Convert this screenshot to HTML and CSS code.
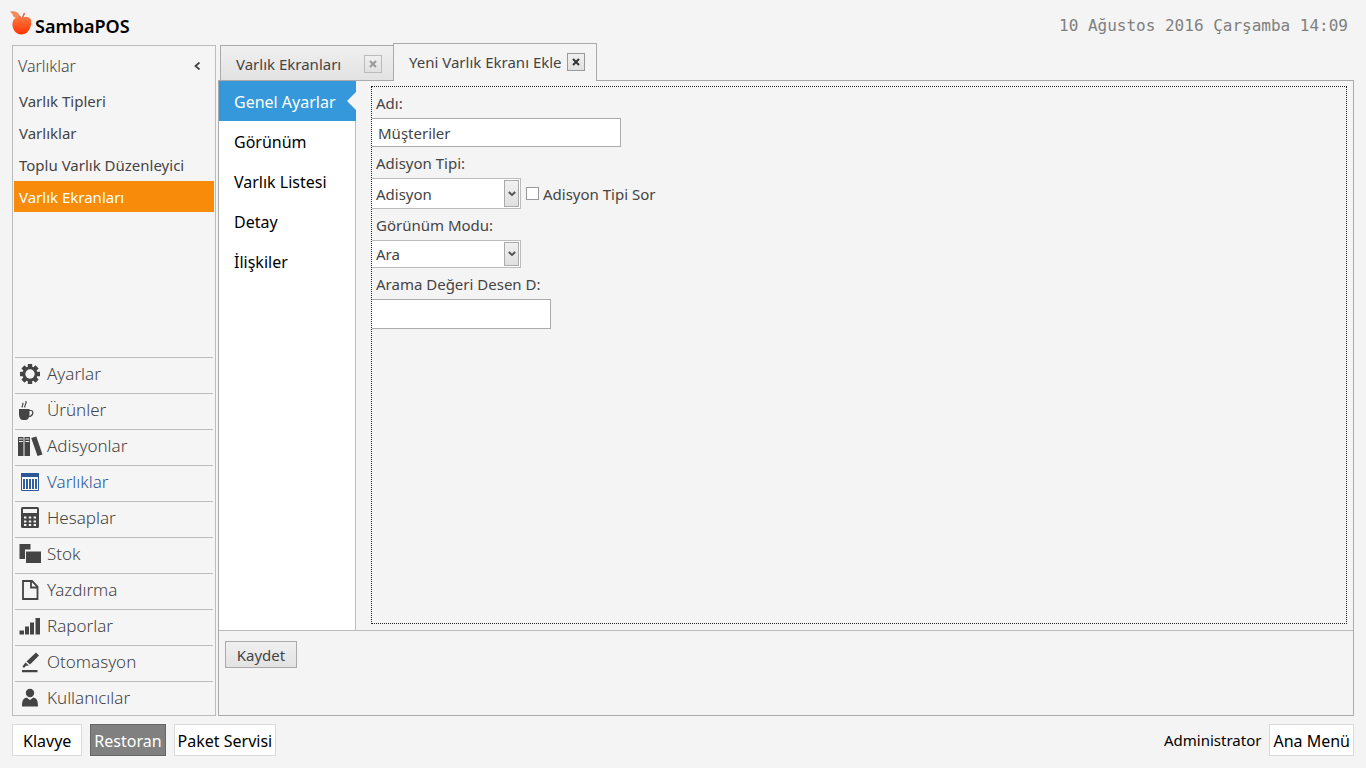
FILE: index.html
```html
<!DOCTYPE html>
<html lang="tr">
<head>
<meta charset="utf-8">
<title>SambaPOS</title>
<link rel="stylesheet" href="styles.css">
</head>
<body class="app">
<header class="header">
  <div class="brand">
    <svg class="brand-logo" viewBox="0 0 23 26" width="23" height="26" aria-hidden="true">
      <defs><linearGradient id="fruit" x1="0" y1="0" x2="0" y2="1"><stop offset="0" stop-color="#ff7a45"/><stop offset="1" stop-color="#ff3300"/></linearGradient></defs>
      <path d="M0 1.500C3 1 9 .5 10.500 8C6 9 2.500 7 2.500 4Z" fill="#f58a5b"/>
      <path d="M11 9L9.500 6M12 9L14.500 3" stroke="#e0603a" stroke-width="1.500" fill="none"/>
      <path d="M11.500 8.500C14 6.500 18 5.500 20.500 9C22.500 13 20.500 19.500 16.500 23C13.500 25 8.500 25 6 22.500C2.500 19.500 1.500 14 3.500 10C5.500 7 9 7 11.500 8.500Z" fill="url(#fruit)"/>
    </svg>
    <span class="brand-name">SambaPOS</span>
  </div>
  <time class="clock">10 Ağustos 2016 Çarşamba 14:09</time>
</header>

<div class="workspace">
  <aside class="sidebar">
    <div class="sidebar-head">
      <span>Varlıklar</span>
      <button class="collapse" aria-label="Daralt"><svg viewBox="0 0 8 8" width="8" height="8"><path d="M6.500 .5L2.500 4L6.500 7.500" fill="none" stroke="#444" stroke-width="1.800"/></svg></button>
    </div>
    <nav class="links">
      <a class="link" href="#">Varlık Tipleri</a>
      <a class="link" href="#">Varlıklar</a>
      <a class="link" href="#">Toplu Varlık Düzenleyici</a>
      <a class="link link-active" href="#">Varlık Ekranları</a>
    </nav>
    <nav class="modules">
      <a class="module" href="#"><svg class="icon" viewBox="0 0 24 24"><g fill="#444"><rect x="9.800" y="2" width="4.400" height="20"/><rect x="9.800" y="2" width="4.400" height="20" transform="rotate(45 12 12)"/><rect x="9.800" y="2" width="4.400" height="20" transform="rotate(90 12 12)"/><rect x="9.800" y="2" width="4.400" height="20" transform="rotate(135 12 12)"/><circle cx="12" cy="12" r="7.600"/></g><circle cx="12" cy="12" r="4.700" fill="#f5f5f5"/></svg>Ayarlar</a>
      <a class="module" href="#"><svg class="icon" viewBox="0 0 24 24"><path d="M1 11H11.500V16C11.500 19 10 22 8 22H4.500C2.500 22 1 19 1 16Z" fill="#444"/><path d="M11 12.500H13C16 12.500 15.500 18.500 10.500 18.500M4.500 9.500C3 7.500 6 7 4.700 4.800M7 9.500C5.500 7 9.500 6 7.800 3" fill="none" stroke="#444" stroke-width="1.200"/></svg>Ürünler</a>
      <a class="module" href="#"><svg class="icon" viewBox="0 0 24 24"><path d="M0 3H5.500V22H0ZM6.500 3H12V22H6.500ZM13.200 4L18.300 2.500L24.500 20.500L19.500 22Z" fill="#444"/><path d="M1 5H4.800M1 7.500H4.800M7.500 5H11.200M7.500 7.500H11.200" stroke="#f5f5f5"/></svg>Adisyonlar</a>
      <a class="module module-active" href="#"><svg class="icon" viewBox="0 0 24 24"><path d="M3.500 3.500H20.500V20.500H3.500Z" fill="#fff" stroke="#2b579a"/><path d="M3 3H21V7H3Z" fill="#2b579a"/><path d="M6 9V19M9 9V19M12 9V19M15 9V19M18 9V19" stroke="#2b579a" stroke-width="1.900"/></svg>Varlıklar</a>
      <a class="module" href="#"><svg class="icon" viewBox="0 0 24 24"><rect x="3" y="1" width="18" height="21" rx="1.500" fill="#444"/><path d="M5 3H19V7H5Z" fill="#f5f5f5"/><path d="M6 11.500H18M6 15.500H18M6 19H18" stroke="#f5f5f5" stroke-width="2" stroke-dasharray="2.400 2.400"/></svg>Hesaplar</a>
      <a class="module" href="#"><svg class="icon" viewBox="0 0 24 24"><path d="M1.500 2H12.500V7.500H7V17H1.500Z" fill="#444"/><path d="M8 9.500H23V21H8Z" fill="#444"/></svg>Stok</a>
      <a class="module" href="#"><svg class="icon" viewBox="0 0 24 24"><path d="M5 3H14L19.500 8.500V21H5ZM13 3V9.500H19.500" fill="none" stroke="#444" stroke-width="1.800"/></svg>Yazdırma</a>
      <a class="module" href="#"><svg class="icon" viewBox="0 0 24 24"><path d="M1.500 16.500H6V20.500H1.500ZM7 12.500H11V20.500H7ZM12 8.500H16V20.500H12ZM17.500 4H22V20.500H17.500Z" fill="#444"/></svg>Raporlar</a>
      <a class="module" href="#"><svg class="icon" viewBox="0 0 24 24"><path d="M4 20H19.500V22.200H4ZM18 2.500L21 5.500L12 14.500L8.500 11.500ZM7.500 12.500L11 15.500L8 15.800L6.500 17.500H4.800V16Z" fill="#444"/></svg>Otomasyon</a>
      <a class="module" href="#"><svg class="icon" viewBox="0 0 24 24"><circle cx="12" cy="7" r="4.200" fill="#444"/><path d="M4 20.500C4 15 5 12.500 8.500 11.500L12 14L15.500 11.500C19 12.500 20 15 20 20.500Z" fill="#444"/></svg>Kullanıcılar</a>
    </nav>
  </aside>

  <main class="main">
    <div class="tabs">
      <div class="tab"><span>Varlık Ekranları</span><button class="tab-close tab-close-dim" aria-label="Kapat"><svg viewBox="0 0 8 8" width="8" height="8"><path d="M1 1L7 7M7 1L1 7" stroke="currentColor" stroke-width="2"/></svg></button></div>
      <div class="tab tab-active"><span>Yeni Varlık Ekranı Ekle</span><button class="tab-close" aria-label="Kapat"><svg viewBox="0 0 8 8" width="8" height="8"><path d="M1 1L7 7M7 1L1 7" stroke="currentColor" stroke-width="2"/></svg></button></div>
    </div>
    <section class="panel">
      <div class="editor">
        <nav class="pages">
          <a class="page page-active" href="#">Genel Ayarlar</a>
          <a class="page" href="#">Görünüm</a>
          <a class="page" href="#">Varlık Listesi</a>
          <a class="page" href="#">Detay</a>
          <a class="page" href="#">İlişkiler</a>
        </nav>
        <form class="form">
          <label class="label" for="name">Adı:</label>
          <input class="text text-wide" id="name" type="text" value="Müşteriler">
          <label class="label" for="type">Adisyon Tipi:</label>
          <div class="row">
            <div class="combo"><select class="select select-tall" id="type"><option>Adisyon</option></select><span class="combo-button"><svg viewBox="0 0 8 6" width="8" height="6"><path d="M.8 1L4 4L7.200 1" fill="none" stroke="#555" stroke-width="2"/></svg></span></div>
            <label class="check"><input class="checkbox" type="checkbox">Adisyon Tipi Sor</label>
          </div>
          <label class="label" for="mode">Görünüm Modu:</label>
          <div class="combo"><select class="select" id="mode"><option>Ara</option></select><span class="combo-button"><svg viewBox="0 0 8 6" width="8" height="6"><path d="M.8 1L4 4L7.200 1" fill="none" stroke="#555" stroke-width="2"/></svg></span></div>
          <label class="label" for="pattern">Arama Değeri Desen D:</label>
          <input class="text" id="pattern" type="text">
        </form>
      </div>
      <div class="actions"><button class="save">Kaydet</button></div>
    </section>
  </main>
</div>

<footer class="footer">
  <button class="foot-button foot-keyboard">Klavye</button>
  <button class="foot-button foot-selected">Restoran</button>
  <button class="foot-button">Paket Servisi</button>
  <span class="user">Administrator</span>
  <button class="foot-button">Ana Menü</button>
</footer>
</body>
</html>
```
FILE: styles.css
```css
* { box-sizing: border-box; }

.app {
  margin: 0;
  height: 100vh;
  display: flex;
  flex-direction: column;
  background: #f4f4f4;
  color: #444;
  font: 15px/20px "Noto Sans", "Open Sans", sans-serif;
}
button, input, select { font: inherit; color: inherit; }
button { padding: 0; margin: 0; }
a { color: inherit; text-decoration: none; }

.header {
  flex: none;
  height: 43px;
  padding: 8px 18px 0 10px;
  display: flex;
  justify-content: space-between;
  align-items: center;
}
.brand { display: flex; align-items: center; gap: 2px; }
.brand-logo { margin-bottom: 6px; }
.brand-name { font-size: 18px; font-weight: 600; color: #000; }
.clock { font: 16px/20px "DejaVu Sans Mono", monospace; color: #808080; }

.workspace { flex: 1; min-height: 0; display: flex; gap: 2px; padding: 0 12px; }

.sidebar {
  flex: none;
  width: 204px;
  margin-top: 2px;
  padding: 0 1px;
  border: 1px solid #bcbcbc;
  background: #f5f5f5;
  display: flex;
  flex-direction: column;
}
.sidebar-head {
  height: 39px;
  padding: 0 12px 0 4px;
  display: flex;
  justify-content: space-between;
  align-items: center;
  font-size: 16px;
  font-weight: 300;
}
.collapse { width: 10px; height: 20px; border: 0; background: none; display: grid; place-items: center; }
.link { display: flex; align-items: center; height: 32px; padding-left: 5px; }
.link-active { height: 31px; background: #f88c0a; color: #fff; }
.modules { margin-top: auto; padding: 0 1px; }
.module {
  display: flex;
  align-items: center;
  gap: 5px;
  height: 36px;
  padding: 0 0 4px 3px;
  border-top: 1px solid #bcbcbc;
  font-size: 17px;
  font-weight: 300;
}
.module:last-child { height: 34px; padding-bottom: 2px; }
.module-active { color: #2b579a; }
.icon { flex: none; width: 24px; height: 24px; overflow: visible; }

.main { flex: 1; min-width: 0; display: flex; flex-direction: column; }
.tabs { flex: none; height: 38px; display: flex; align-items: flex-end; padding-left: 2px; margin-bottom: -1px; }
.tab {
  height: 36px;
  width: 174px;
  padding: 2px 11px 0 15px;
  display: flex;
  align-items: center;
  justify-content: space-between;
  border: 1px solid #aaa;
  background: linear-gradient(#f0f0f0, #e2e2e2);
}
.tab-active {
  height: 38px;
  width: 204px;
  margin-left: -1px;
  padding: 0 11px 1px 15px;
  border-bottom: 0;
  background: #f4f4f4;
  z-index: 1;
}
.tab-close {
  width: 18px;
  height: 18px;
  border: 1px solid #999;
  background: linear-gradient(#f0f0f0, #e0e0e0);
  color: #333;
  display: grid;
  place-items: center;
}
.tab-close-dim { border-color: #bbb; color: #999; }

.panel { flex: 1; min-height: 0; border: 1px solid #aaa; display: flex; flex-direction: column; }
.editor { flex: 1; display: flex; }
.pages { flex: none; width: 137px; background: #fff; border-right: 1px solid #bcbcbc; margin-right: 15px; }
.page {
  display: flex;
  align-items: center;
  height: 40px;
  padding: 2px 0 0 15px;
  color: #000;
  font-size: 16px;
}
.page-active { position: relative; background: #3498db; color: #fff; margin-right: -1px; }
.page-active::after {
  content: "";
  position: absolute;
  right: 0;
  top: 11px;
  border: 9px solid transparent;
  border-left-width: 0;
  border-right-color: #f4f4f4;
}

.form { flex: 1; margin: 5px 6px 6px 0; border: 1px dotted #222; display: flex; flex-direction: column; align-items: flex-start; }
.label { height: 31px; padding: 6px 0 0 4px; }
.text { width: 179px; height: 30px; padding: 0 6px; border: 1px solid #aaa; border-left: 0; background: #fff; }
.text-wide { width: 249px; height: 29px; }
.row { display: flex; align-items: center; gap: 5px; }
.combo { position: relative; display: flex; }
.select {
  appearance: none;
  width: 149px;
  height: 28px;
  padding: 0 4px;
  border: 1px solid #bcbcbc;
  border-left: 0;
  border-radius: 0;
  background: #fff;
}
.select-tall { height: 31px; }
.combo-button {
  position: absolute;
  right: 2px;
  top: 2px;
  bottom: 2px;
  width: 15px;
  border: 1px solid #aaa;
  background: linear-gradient(#f0f0f0, #e0e0e0);
  display: grid;
  place-items: center;
  pointer-events: none;
}
.check { display: flex; align-items: center; gap: 4px; }
.checkbox { appearance: none; width: 13px; height: 13px; margin: 0; border: 1px solid #999; background: #fff; }

.actions { flex: none; height: 85px; padding: 10px 6px; border-top: 1px solid #bcbcbc; }
.save { width: 72px; height: 27px; border: 1px solid #aaa; background: linear-gradient(#f0f0f0, #e2e2e2); }

.footer { flex: none; height: 52px; padding: 8px 12px 0; display: flex; align-items: flex-start; gap: 8px; color: #000; font-size: 16px; }
.foot-button { height: 32px; padding: 2px 3px 0; border: 1px solid #d8d8d8; background: #fff; white-space: nowrap; }
.foot-keyboard { padding: 2px 10px 0; }
.foot-selected { background: #808080; border-color: #666; color: #fff; }
.user { margin-left: auto; font-size: 15px; line-height: 32px; }
```
